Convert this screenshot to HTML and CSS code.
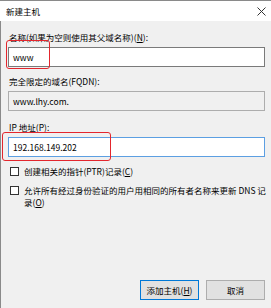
FILE: index.html
```html
<!DOCTYPE html>
<html lang="zh-CN">
<head>
  <meta charset="UTF-8" />
  <meta name="viewport" content="width=device-width, initial-scale=1" />
  <title>新建主机</title>
  <link rel="stylesheet" href="styles.css">
</head>
<body>
  <div class="window">
    <header class="titlebar">
      <span class="title">新建主机</span>
      <svg class="close" width="9" height="9" viewBox="0 0 9 9">
        <path d="M0.5 0.5 L8.5 8.5 M8.5 0.5 L0.5 8.5" stroke="#333" stroke-width="1" fill="none" />
      </svg>
    </header>
    <main class="content">
      <div class="field first">
        <div class="field-label">名称(如果为空则使用其父域名称)(<u>N</u>):</div>
        <div class="textbox">www</div>
      </div>
      <div class="field second">
        <div class="field-label">完全限定的域名(FQDN):</div>
        <div class="textbox readonly">www.lhy.com.</div>
      </div>
      <div class="field third">
        <div class="field-label">IP 地址(<u>P</u>):</div>
        <div class="textbox focused">192.168.149.202</div>
      </div>
      <label class="check-row">
        <span class="checkbox"></span>
        <span class="check-text">创建相关的指针(PTR)记录(<u>C</u>)</span>
      </label>
      <label class="check-row">
        <span class="checkbox"></span>
        <span class="check-text">允许所有经过身份验证的用户用相同的所有者名称来更新 DNS 记<br>录(<u>O</u>)</span>
      </label>
      <div class="buttons">
        <button class="btn default">添加主机(<u>H</u>)</button>
        <button class="btn">取消</button>
      </div>
    </main>
    <!-- annotation marks over the dialog -->
    <div class="mark mark-name"></div>
    <div class="mark mark-ip"></div>
  </div>
</body>
</html>
```

FILE: styles.css
```css
/* Reset & Global Styles */
html, body {
  margin: 0;
  padding: 0;
}
body {
  width: 271px;
  height: 308px;
  overflow: hidden;
  background-color: #f0f0f0;
  font-family: "Noto Sans CJK SC", "Noto Sans", sans-serif;
  font-size: 8.5px;
  color: #000;
}
.window {
  position: relative;
  width: 271px;
  height: 308px;
  box-sizing: border-box;
  border-top: 1px solid #8a8a8a;
  display: flex;
  flex-direction: column;
}
/* Title bar */
.titlebar {
  height: 20px;
  background-color: #fff;
  display: flex;
  align-items: center;
  justify-content: space-between;
  padding: 0 5px 0 6px;
}
.close {
  display: block;
}
/* Content */
.content {
  flex: 1;
  border-left: 1px solid #8a8a8a;
  padding: 10px 6px 8px 7px;
  display: flex;
  flex-direction: column;
}
.field-label {
  height: 12px;
  line-height: 12px;
  margin-bottom: 4px;
  padding-left: 1px;
}
.field.first {
  margin-bottom: 8px;
}
.field.second {
  margin-bottom: 10px;
}
.field.third {
  margin-bottom: 8px;
}
.textbox {
  height: 20px;
  box-sizing: border-box;
  border: 1px solid #7a7a7a;
  background-color: #fff;
  line-height: 18px;
  padding-left: 4px;
}
.textbox.readonly {
  background-color: #f0f0f0;
  border-color: #adadad;
}
.textbox.focused {
  border-color: #5c9fe2;
}
/* Checkboxes */
.check-row {
  display: flex;
  align-items: flex-start;
  line-height: 12px;
  margin-bottom: 7px;
}
.checkbox {
  width: 7px;
  height: 7px;
  margin: 2px 5px 0 2px;
  border: 1px solid #333;
  background-color: #fff;
  flex-shrink: 0;
}
.check-text {
  white-space: nowrap;
}
/* Buttons */
.buttons {
  margin-top: auto;
  display: flex;
  justify-content: flex-end;
  gap: 7px;
}
.btn {
  width: 59px;
  height: 20px;
  box-sizing: border-box;
  border: 1px solid #adadad;
  background-color: #e1e1e1;
  font-family: inherit;
  font-size: 8.5px;
  color: #000;
  padding: 0;
}
.btn.default {
  border-color: #0078d7;
}
/* Red annotation rectangles */
.mark {
  position: absolute;
  border: 1px solid #e3262d;
  border-radius: 3px;
}
.mark-name {
  left: 6px;
  top: 39px;
  width: 42px;
  height: 27px;
}
.mark-ip {
  left: 2px;
  top: 131px;
  width: 107px;
  height: 27px;
}
```
